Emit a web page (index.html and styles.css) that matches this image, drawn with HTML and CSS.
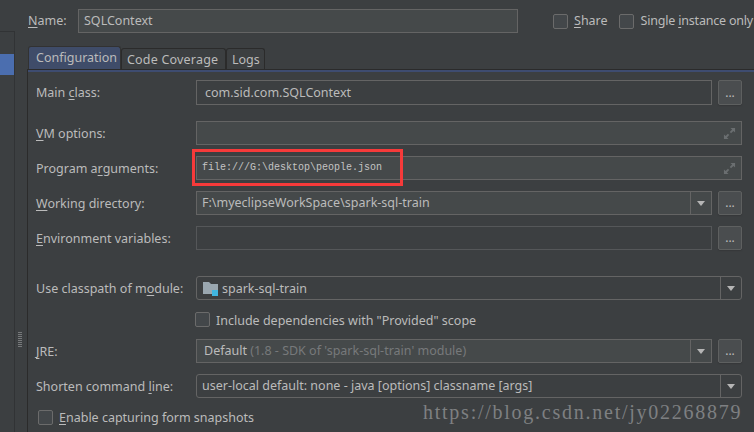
FILE: index.html
```html
<!DOCTYPE html>
<html lang="en">
<head>
<meta charset="utf-8">
<title>Run Configuration</title>
<link rel="stylesheet" href="styles.css">
</head>
<body>
<div class="window">
  <aside class="side"><div class="side-sel"></div></aside>
  <div class="splitter"><div class="grip"></div></div>
  <main class="main">
    <div class="name-row">
      <label class="name-label"><u>N</u>ame:</label>
      <div class="field name-field">SQLContext</div>
      <span class="check"></span><span class="check-text"><u>S</u>hare</span>
      <span class="check check-second"></span><span class="check-text tight">Single <u>i</u>nstance only</span>
    </div>
    <div class="tabs">
      <div class="tab tab-active">Configuration</div>
      <div class="tab tab-code">Code Coverage</div>
      <div class="tab tab-logs">Logs</div>
    </div>
    <div class="panel">
      <div class="row row-main">
        <label class="lab">Main <u>c</u>lass:</label>
        <div class="field grow pad9">com.sid.com.SQLContext</div>
        <button class="dots">...</button>
      </div>
      <div class="row row-vm">
        <label class="lab"><u>V</u>M options:</label>
        <div class="field grow filled">
          <svg class="expand" viewBox="0 0 14 14" aria-hidden="true"><path class="exp-a" d="M8 1h5v5l-1.8-1.8-2.5 2.5-1.4-1.4 2.5-2.5z"/><path class="exp-b" d="M6 13H1V8l1.8 1.8 2.5-2.5 1.4 1.4-2.5 2.5z"/></svg>
        </div>
      </div>
      <div class="row row-prog">
        <label class="lab">Program a<u>r</u>guments:</label>
        <div class="field grow filled mono">file:///G:\desktop\people.json
          <svg class="expand" viewBox="0 0 14 14" aria-hidden="true"><path class="exp-a" d="M8 1h5v5l-1.8-1.8-2.5 2.5-1.4-1.4 2.5-2.5z"/><path class="exp-b" d="M6 13H1V8l1.8 1.8 2.5-2.5 1.4 1.4-2.5 2.5z"/></svg>
        </div>
      </div>
      <div class="row row-work">
        <label class="lab"><u>W</u>orking directory:</label>
        <div class="field grow filled combo">
          <span class="combo-text pad5">F:\myeclipseWorkSpace\spark-sql-train</span>
          <span class="arrow"></span>
        </div>
        <button class="dots">...</button>
      </div>
      <div class="row row-env">
        <label class="lab"><u>E</u>nvironment variables:</label>
        <div class="field grow dim"></div>
        <button class="dots">...</button>
      </div>
      <div class="row row-cp">
        <label class="lab">Use classpath of m<u>o</u>dule:</label>
        <div class="field grow combo round">
          <span class="combo-text pad6 nudge"><svg class="folder" viewBox="0 0 15 15" aria-hidden="true"><path class="folder-body" d="M0 0h6l2 2h7v10H0z"/><rect class="folder-mod" x="9" y="8" width="6" height="6"/></svg><span>spark-sql-train</span></span>
          <span class="arrow"></span>
        </div>
      </div>
      <div class="row row-dep">
        <span class="check"></span><span class="check-text nudge">Include dependencies with "Provided" scope</span>
      </div>
      <div class="row row-jre">
        <label class="lab"><u>J</u>RE:</label>
        <div class="field grow filled combo">
          <span class="combo-text pad8">Default <span class="muted">(1.8 - SDK of 'spark-sql-train' module)</span></span>
          <span class="arrow"></span>
        </div>
        <button class="dots">...</button>
      </div>
      <div class="row row-short">
        <label class="lab">Shorten command <u>l</u>ine:</label>
        <div class="field grow combo round">
          <span class="combo-text pad6">user-local default: none - java [options] classname [args]</span>
          <span class="arrow"></span>
        </div>
      </div>
      <div class="row row-snap">
        <span class="check"></span><span class="check-text"><u>E</u>nable capturing form snapshots</span>
      </div>
    </div>
  </main>
</div>
<div class="highlight"></div>
<div class="watermark">https://blog.csdn.net/jy02268879</div>
</body>
</html>
```
FILE: styles.css
```css
* { box-sizing: border-box; }
html, body { margin: 0; padding: 0; }
body {
  width: 754px;
  height: 432px;
  overflow: hidden;
  position: relative;
  background: #3c3f41;
  color: #bbbbbb;
  font-family: "Noto Sans", "Open Sans", sans-serif;
  font-size: 12.5px;
  line-height: 16px;
}
u { text-underline-offset: 2px; text-decoration-thickness: 1px; }
.window { display: flex; width: 754px; height: 432px; }

.side {
  width: 15px;
  flex: none;
  margin-top: 31px;
  padding-top: 22px;
  border-top: 1px solid #313335;
  border-right: 1px solid #313335;
}
.side-sel { height: 21px; background: #4b6eaf; }

.splitter { width: 12px; flex: none; padding: 332px 0 0 3px; }
.grip {
  width: 4px;
  height: 15px;
  background: repeating-linear-gradient(#77797b 0 1px, transparent 1px 2px);
}

.main { flex: 1; min-width: 0; padding-top: 9px; overflow: hidden; }

.name-row { display: flex; align-items: center; height: 24px; padding-left: 1px; white-space: nowrap; }
.name-label { width: 50px; flex: none; }
.name-field { width: 440px; flex: none; height: 24px; margin-right: 35px; background: #45494a; padding-left: 5px; }

.field {
  border: 1px solid #646464;
  display: flex;
  align-items: center;
  position: relative;
  min-width: 0;
}
.grow { flex: 1; height: 100%; }
.filled { background: #45494a; }
.dim { border-color: #555759; }
.round { border-radius: 3px; }
.pad9 { padding-left: 8px; }

.check {
  width: 15px;
  height: 15px;
  flex: none;
  border: 1px solid #6b6b6b;
  border-radius: 2px;
  background: #43474a;
  margin-right: 6px;
}
.check-second { margin-left: 11px; margin-right: 7px; }
.check-text { white-space: nowrap; }
.tight { letter-spacing: -.2px; }
.nudge { padding-top: 2px; }

.tabs { display: flex; align-items: flex-end; height: 23px; margin-top: 13px; padding-left: 1px; }
.tab {
  height: 21px;
  padding: 3px 0 0 5px;
  border: 1px solid #2b2b2b;
  border-bottom: none;
  border-radius: 3px 3px 0 0;
}
.tab-active { width: 93px; height: 23px; padding: 3px 0 0 7px; background: #3f4c69; border-color: #323232; }
.tab-code { width: 105px; letter-spacing: .2px; }
.tab-logs { width: 39px; }

.panel {
  border-top: 1px solid #2b2b2b;
  border-left: 1px solid #2b2b2b;
  height: 370px;
  padding-left: 8px;
  padding-right: 12px;
  position: relative;
}
.panel::before {
  content: "";
  display: block;
  height: 2px;
  background: #3e4c70;
  margin: 0 -12px 0 -8px;
}
.row { display: flex; align-items: center; height: 24px; }
.lab { width: 160px; flex: none; white-space: nowrap; padding-top: 2px; }

.row-main { height: 25px; margin-top: 8px; }
.row-main .lab { padding-top: 0; }
.row-vm { margin-top: 16px; }
.row-prog { margin-top: 11px; }
.row-work { margin-top: 11px; }
.row-env { margin-top: 11px; }
.row-cp { margin-top: 26px; }
.row-dep { height: 15px; margin-top: 12px; padding-left: 159px; }
.row-jre { margin-top: 12px; }
.row-short { margin-top: 11px; }
.row-snap { height: 15px; margin-top: 12px; padding-left: 2px; }

.dots {
  width: 24px;
  height: 100%;
  flex: none;
  margin-left: 6px;
  padding: 0;
  border: 1px solid #5e6060;
  border-radius: 2px;
  background: #4a4d4f;
  color: #bbbbbb;
  font: 12px/16px "Noto Sans", sans-serif;
  box-shadow: 0 1px 1px #36383a;
}

.mono {
  font-family: "Liberation Mono", monospace;
  font-size: 10px;
  padding-left: 5px;
  color: #c4c4c4;
}
.expand { position: absolute; right: 5px; top: 5px; width: 13px; height: 13px; }
.exp-a, .exp-b { fill: #6a6e70; }

.combo { justify-content: space-between; }
.combo-text { display: flex; align-items: center; gap: 4px; white-space: pre; }
.pad5 { padding-left: 5px; }
.pad6 { padding-left: 5px; }
.pad8 { padding-left: 7px; gap: 0; }
.muted { color: #77797b; }
.arrow {
  width: 21px;
  height: 100%;
  flex: none;
  border-left: 1px solid #646464;
  position: relative;
}
.arrow::after {
  content: "";
  position: absolute;
  left: 6px;
  top: 9px;
  border-left: 4px solid transparent;
  border-right: 4px solid transparent;
  border-top: 5px solid #b5b5b5;
}
.folder { width: 15px; height: 15px; margin-left: 1px; }
.folder-body { fill: #9aa7b0; }
.folder-mod { fill: #40b6e0; }

.highlight {
  position: absolute;
  left: 192px;
  top: 149px;
  width: 211px;
  height: 37px;
  border: 3px solid #f63a3a;
}
.watermark {
  position: absolute;
  left: 423px;
  top: 400px;
  font-family: "Liberation Serif", serif;
  font-size: 20px;
  line-height: 24px;
  letter-spacing: 1.75px;
  color: #7e8082;
  white-space: nowrap;
}
```
